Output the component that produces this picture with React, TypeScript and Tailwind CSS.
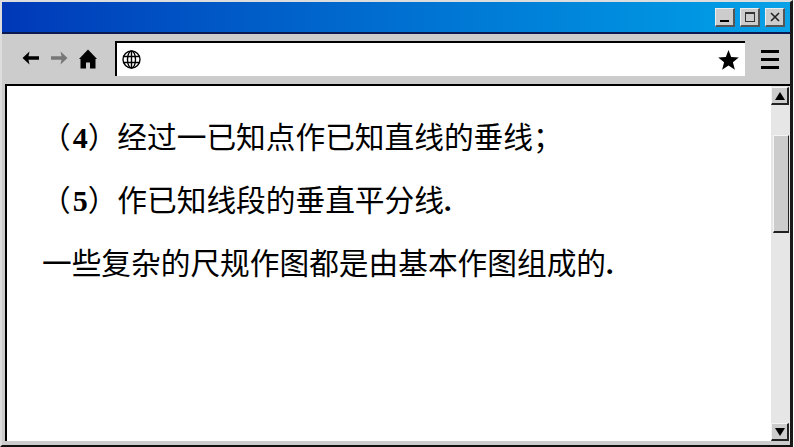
import React from "react";

function WinBtn({ children }: { children: React.ReactNode }) {
  return (
    <div className="w-[20px] h-[19px] bg-[#cccccc] border-t border-l border-t-[#eeeeee] border-l-[#eeeeee] border-r-2 border-b-2 border-r-[#555555] border-b-[#555555] flex items-center justify-center">
      {children}
    </div>
  );
}

function ScrollBtn({ up }: { up: boolean }) {
  return (
    <div className="w-[18px] h-[18px] shrink-0 bg-[#cccccc] border-t border-l border-t-[#f4f4f4] border-l-[#f4f4f4] border-r-2 border-b-2 border-r-[#222222] border-b-[#222222] flex items-center justify-center">
      <svg width="10" height="8" viewBox="0 0 10 8">
        <path d={up ? "M5 0 L10 8 L0 8 Z" : "M0 0 L10 0 L5 8 Z"} fill="#000" />
      </svg>
    </div>
  );
}

const num = "font-['Liberation_Serif',serif] font-bold text-[30px]";

export default function App() {
  return (
    <div className="w-[793px] h-[447px] overflow-hidden flex flex-col bg-[#cccccc] border-t-2 border-t-[#dddddd] border-l-2 border-l-[#dddddd] border-r-[3px] border-r-[#1a1a1a] border-b-2 border-b-[#111111]">
      {/* Title bar */}
      <div className="h-[32px] shrink-0 bg-gradient-to-r from-[#0038b8] to-[#0ca2e8] border-b-2 border-b-[#0a1a50] flex items-center justify-end gap-[5px] pr-[5px]">
        <WinBtn>
          <div className="w-[9px] h-[2px] bg-black mt-[8px]" />
        </WinBtn>
        <WinBtn>
          <div className="w-[10px] h-[10px] border border-[#333333] border-t-2" />
        </WinBtn>
        <WinBtn>
          <svg width="10" height="10" viewBox="0 0 10 10">
            <path d="M1 1 L9 9 M9 1 L1 9" stroke="#222" strokeWidth="1.6" />
          </svg>
        </WinBtn>
      </div>

      {/* Toolbar */}
      <div className="h-[50px] shrink-0 flex items-center pl-[20px] pr-[11px]">
        <svg width="18" height="14" viewBox="0 0 18 14" className="mr-[10px] -mt-[2px]">
          <path d="M0.5 7 L7.5 0.5 L6.5 5.2 L17 5.2 L17 8.8 L6.5 8.8 L7.5 13.5 Z" fill="#000" />
        </svg>
        <svg width="18" height="14" viewBox="0 0 18 14" className="mr-[11px] -mt-[2px]">
          <path d="M17.5 7 L10.5 0.5 L11.5 5.2 L1 5.2 L1 8.8 L11.5 8.8 L10.5 13.5 Z" fill="#777777" />
        </svg>
        <svg width="18" height="20" viewBox="0 0 18 20" className="mr-[18px] -mt-[1px]">
          <path d="M9 0.5 L18 10 L16.5 10 L16.5 19.5 L11 19.5 L11 13.5 L7 13.5 L7 19.5 L1.5 19.5 L1.5 10 L0 10 Z" fill="#000" />
        </svg>
        <div className="w-[630px] h-[35px] bg-white border-t-2 border-l-2 border-t-black border-l-black flex items-center justify-between pl-[5px] pr-[6px] -mt-[1px]">
          <svg width="19" height="19" viewBox="0 0 19 19" fill="none" stroke="#000" strokeWidth="1.4">
            <circle cx="9.5" cy="9.5" r="8.5" />
            <ellipse cx="9.5" cy="9.5" rx="4" ry="8.5" />
            <path d="M9.5 1 V18 M1 6.5 H18 M1 12.5 H18" />
          </svg>
          <svg width="21" height="20" viewBox="0 0 21 20">
            <path d="M10.5 0 L13.2 7 L20.8 7.4 L14.9 12.2 L16.9 19.8 L10.5 15.5 L4.1 19.8 L6.1 12.2 L0.2 7.4 L7.8 7 Z" fill="#000" />
          </svg>
        </div>
        <div className="ml-auto flex flex-col gap-[5px]">
          <div className="w-[18px] h-[3px] bg-black" />
          <div className="w-[18px] h-[3px] bg-black" />
          <div className="w-[18px] h-[3px] bg-black" />
        </div>
      </div>

      {/* Content frame */}
      <div className="flex-1 min-h-0 ml-[3px] mb-[4px] flex border-t-2 border-l-2 border-t-black border-l-black bg-white">
        <div className="flex-1 pt-[18px] pl-[34px] font-['Noto_Sans_CJK_SC',sans-serif] text-[29.7px] leading-[63px] text-black whitespace-nowrap">
          <div className="h-[63px] overflow-visible">
            <span className="mr-[2px]">（</span>
            <span className={num}>4</span>
            <span>）经过一已知点作已知直线的垂线；</span>
          </div>
          <div className="h-[63px] overflow-visible">
            <span className="mr-[2px]">（</span>
            <span className={num}>5</span>
            <span>）作已知线段的垂直平分线</span>
            <span className="font-['Liberation_Serif',serif] font-bold">.</span>
          </div>
          <div className="h-[63px] ml-[1px]">
            一些复杂的尺规作图都是由基本作图组成的<span className="font-['Liberation_Serif',serif] font-bold">.</span>
          </div>
        </div>
        {/* Scrollbar */}
        <div className="w-[19px] shrink-0 flex flex-col bg-[#e6e6e6] pt-[1px]">
          <ScrollBtn up />
          <div className="flex-1 pt-[30px]">
            <div className="w-[16px] h-[98px] ml-[2px] bg-[#cccccc] border-t border-l border-t-[#f4f4f4] border-l-[#f4f4f4] border-r border-b-2 border-r-[#222222] border-b-[#222222]" />
          </div>
          <ScrollBtn up={false} />
        </div>
      </div>
    </div>
  );
}
